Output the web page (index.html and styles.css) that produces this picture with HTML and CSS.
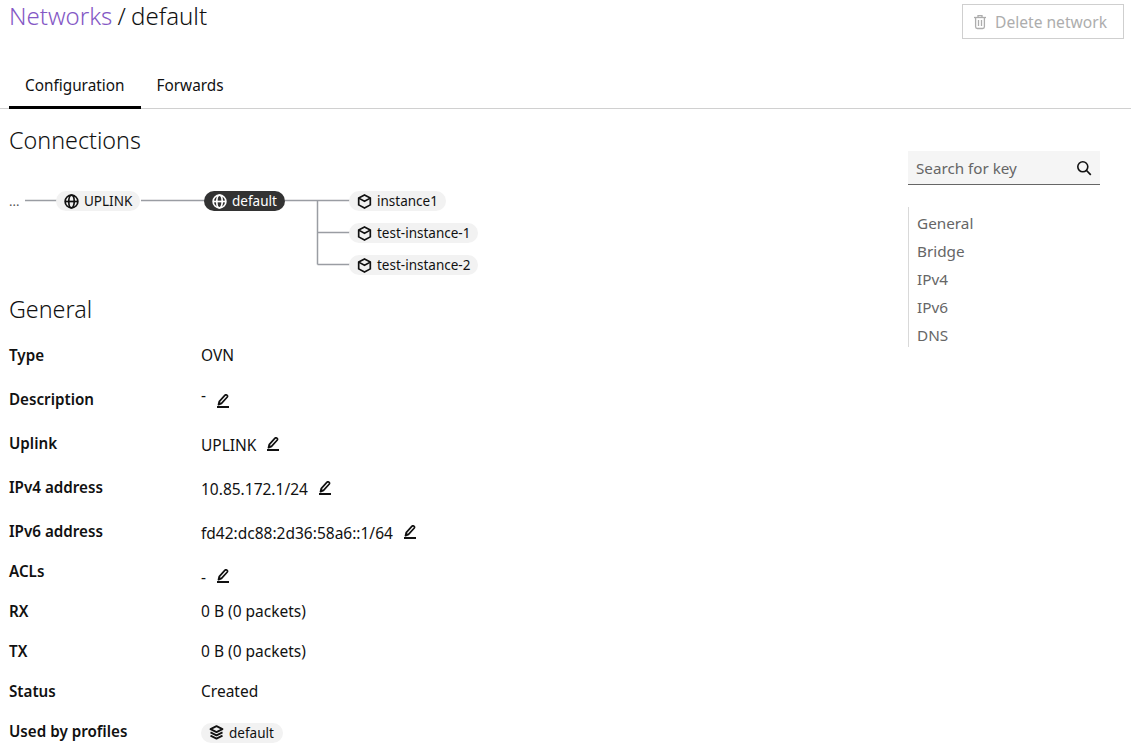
FILE: index.html
```html
<!DOCTYPE html>
<html lang="en">
<head>
    <meta charset="UTF-8">
    <meta name="viewport" content="width=device-width, initial-scale=1.0">
    <title>Network default</title>
    <link rel="stylesheet" href="styles.css">
</head>
<body>

    <svg class="defs" width="0" height="0">
        <symbol id="i-globe" viewBox="0 0 16 16">
            <g fill="none" stroke="currentColor" stroke-width="1.8">
                <circle cx="8" cy="8" r="6.8"/>
                <ellipse cx="8" cy="8" rx="2.9" ry="6.8"/>
                <path d="M1.2 8h13.6"/>
            </g>
        </symbol>
        <symbol id="i-cube" viewBox="0 0 16 16">
            <g fill="none" stroke="currentColor" stroke-width="1.8" stroke-linejoin="round">
                <path d="M8 1l6.2 3.2v7.4L8 15l-6.2-3.4V4.2z"/>
                <path d="M1.8 4.4L8 7.8l6.2-3.4"/>
            </g>
        </symbol>
        <symbol id="i-edit" viewBox="0 0 14 14">
            <path d="M1 14v-2h12v2z" fill="currentColor"/>
            <path d="M3.2 7.6l5.6-6.2c.6-.7 1.5-.7 2.1-.2.7.6.7 1.5.2 2.1L5.5 9.4l-3 1.2z" fill="none" stroke="currentColor" stroke-width="1.7" stroke-linejoin="round"/>
            <path d="M3.2 7.6l2.3 1.8-3 1.2z" fill="currentColor"/>
        </symbol>
        <symbol id="i-stack" viewBox="0 0 16 16">
            <g fill="none" stroke="currentColor" stroke-width="1.9" stroke-linejoin="round">
                <path d="M8 1.2l6.4 3.2L8 7.6 1.6 4.4z"/>
                <path d="M1.6 7.9L8 11.1l6.4-3.2"/>
                <path d="M1.6 11.3L8 14.5l6.4-3.2"/>
            </g>
        </symbol>
    </svg>

    <div class="page">
        <header class="page-header">
            <h1 class="title"><a href="#">Networks</a> / default</h1>
            <button class="delete-btn" disabled>
                <svg class="trash" viewBox="0 0 14 16" width="14" height="16">
                    <g fill="none" stroke="currentColor" stroke-width="1.3">
                        <path d="M1 3.5h12"/>
                        <path d="M5 3.5V1.7h4v1.8"/>
                        <path d="M2.6 3.5v9.3c0 1 .7 1.7 1.7 1.7h5.4c1 0 1.7-.7 1.7-1.7V3.5"/>
                        <path d="M5.5 6v6M8.5 6v6"/>
                    </g>
                </svg>
                Delete network
            </button>
        </header>

        <nav class="tabs">
            <a class="tab active" href="#">Configuration</a>
            <a class="tab" href="#">Forwards</a>
        </nav>

        <div class="content">
            <main class="main">
                <h2 class="section-title">Connections</h2>

                <!-- Network graph -->
                <div class="graph">
                    <svg class="graph-lines" width="480" height="90">
                        <g fill="none" stroke="#9a9da3" stroke-width="1.5">
                            <path d="M16 12.5h32"/>
                            <path d="M132 12.5h64"/>
                            <path d="M276 12.5h66"/>
                            <path d="M308.5 12.5v64"/>
                            <path d="M308.5 44.5h33"/>
                            <path d="M308.5 76.5h33"/>
                        </g>
                    </svg>
                    <span class="dots">...</span>
                    <span class="chip node uplink"><svg class="icon"><use href="#i-globe"/></svg>UPLINK</span>
                    <span class="chip node current"><svg class="icon"><use href="#i-globe"/></svg>default</span>
                    <span class="chip node inst-1"><svg class="icon"><use href="#i-cube"/></svg>instance1</span>
                    <span class="chip node inst-2"><svg class="icon"><use href="#i-cube"/></svg>test-instance-1</span>
                    <span class="chip node inst-3"><svg class="icon"><use href="#i-cube"/></svg>test-instance-2</span>
                </div>

                <h2 class="section-title general">General</h2>

                <div class="row"><div class="key">Type</div><div class="val">OVN</div></div>
                <div class="row"><div class="key">Description</div><div class="val val-top">-<svg class="edit"><use href="#i-edit"/></svg></div></div>
                <div class="row"><div class="key">Uplink</div><div class="val val-low">UPLINK<svg class="edit"><use href="#i-edit"/></svg></div></div>
                <div class="row"><div class="key">IPv4 address</div><div class="val val-low">10.85.172.1/24<svg class="edit"><use href="#i-edit"/></svg></div></div>
                <div class="row short"><div class="key">IPv6 address</div><div class="val val-low">fd42:dc88:2d36:58a6::1/64<svg class="edit"><use href="#i-edit"/></svg></div></div>
                <div class="row short"><div class="key">ACLs</div><div class="val val-lower">-<svg class="edit"><use href="#i-edit"/></svg></div></div>
                <div class="row short"><div class="key">RX</div><div class="val">0 B (0 packets)</div></div>
                <div class="row short"><div class="key">TX</div><div class="val">0 B (0 packets)</div></div>
                <div class="row short"><div class="key">Status</div><div class="val">Created</div></div>
                <div class="row short"><div class="key">Used by profiles</div><div class="val val-chip"><span class="chip"><svg class="icon"><use href="#i-stack"/></svg>default</span></div></div>
            </main>

            <aside class="side">
                <div class="search">
                    <span class="search-text">Search for key</span>
                    <svg viewBox="0 0 16 16" width="16" height="16">
                        <circle cx="6.8" cy="6.8" r="5" fill="none" stroke="#111" stroke-width="1.6"/>
                        <path d="M10.5 10.5l4.3 4.3" stroke="#111" stroke-width="1.7"/>
                    </svg>
                </div>
                <ul class="side-nav">
                    <li>General</li>
                    <li>Bridge</li>
                    <li>IPv4</li>
                    <li>IPv6</li>
                    <li>DNS</li>
                </ul>
            </aside>
        </div>
    </div>

</body>
</html>
```

FILE: styles.css
```css
html, body {
    height: 750px;
    overflow: hidden;
}
body {
    font-family: "Noto Sans", Roboto, sans-serif;
    font-size: 15.5px;
    color: #111;
    background-color: white;
    margin: 0;
}
.defs {
    position: absolute;
}
.page-header {
    display: flex;
    justify-content: space-between;
    padding: 0 7px 0 9px;
    height: 61px;
}
.title {
    font-size: 24px;
    font-weight: 300;
    line-height: 32px;
    word-spacing: -1px;
    margin: 0;
}
.title a {
    color: #8458c5;
    text-decoration: none;
}
.delete-btn {
    display: flex;
    align-items: center;
    gap: 8px;
    height: 35px;
    margin-top: 4px;
    padding: 0 16px 0 10px;
    font: inherit;
    font-size: 15.6px;
    color: #adadad;
    background: white;
    border: 1px solid #cfcfcf;
}
.tabs {
    display: flex;
    height: 47px;
    padding-left: 9px;
    border-bottom: 1px solid #d0d0d0;
}
.tab {
    padding: 14px 16px 0;
    height: 31px;
    font-size: 15.35px;
    color: #111;
    text-decoration: none;
}
.tab.active {
    border-bottom: 3px solid #000;
}
.content {
    display: flex;
    padding-left: 9px;
}
.main {
    width: 899px;
}
.section-title {
    font-size: 23.3px;
    font-weight: 300;
    line-height: 32px;
    margin: 15px 0 0;
}
.general {
    margin: 22px 0 16px;
}
.graph {
    position: relative;
    height: 83px;
    margin-top: 32px;
}
.graph-lines {
    position: absolute;
    left: 0;
    top: 0;
}
.dots {
    position: absolute;
    left: 0;
    top: 1px;
    line-height: 24px;
    font-size: 13px;
    color: #555;
}
.chip {
    display: inline-flex;
    align-items: center;
    gap: 5px;
    height: 20px;
    padding: 0 8px;
    font-size: 13.5px;
    background-color: #f2f2f2;
    border-radius: 10px;
}
.icon {
    width: 15px;
    height: 15px;
}
.node {
    position: absolute;
}
.uplink { left: 47px; top: 3px; }
.current { left: 195px; top: 3px; background-color: #333; color: white; }
.inst-1 { left: 340px; top: 3px; }
.inst-2 { left: 340px; top: 35px; }
.inst-3 { left: 340px; top: 67px; }
.row {
    display: grid;
    grid-template-columns: 192px 1fr;
    height: 44px;
    line-height: 24px;
    padding-top: 2px;
    box-sizing: border-box;
}
.row.short {
    height: 40px;
}
.key {
    font-weight: 600;
    font-size: 15.2px;
}
.val-top {
    margin-top: -4px;
}
.val-top .edit {
    vertical-align: -7px;
}
.val-low {
    margin-top: 2px;
}
.val-low .edit {
    vertical-align: 0;
}
.val-lower {
    margin-top: 6px;
}
.val-lower .edit {
    vertical-align: 0;
}
.val-chip {
    margin-top: 3px;
}
.val-chip .chip {
    padding-right: 9px;
}
.edit {
    width: 14px;
    height: 14px;
    margin-left: 10px;
    vertical-align: -1px;
}
.side {
    width: 192px;
    padding-top: 42px;
}
.search {
    display: flex;
    align-items: center;
    justify-content: space-between;
    height: 33px;
    padding: 0 8px;
    background-color: #f5f5f5;
    border-bottom: 1px solid #666;
}
.search-text {
    color: #666;
    font-size: 15.2px;
}
.side-nav {
    list-style: none;
    margin: 22px 0 0;
    padding: 2px 0 0 8px;
    border-left: 1px solid #d9d9d9;
    color: #666;
    font-size: 15.3px;
    line-height: 28px;
    height: 138px;
}
```
